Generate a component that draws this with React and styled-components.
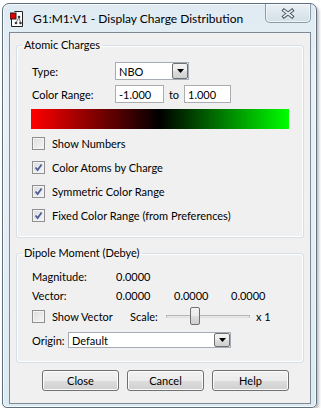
import React from "react";
import styled, { createGlobalStyle } from "styled-components";

const GlobalStyle = createGlobalStyle`
  html, body {
    margin: 0;
    padding: 0;
    background: #ffffff;
  }
  body {
    font-family: Lato, "Liberation Sans", Arial, sans-serif;
    font-size: 11px;
    color: #000;
  }
`;

const AppIcon = () => (
  <svg width="13" height="16" viewBox="0 0 13 16">
    <path d="M4.5 0.5 H12.5 V15.5 H1.5 V7" fill="#fff" stroke="#222" />
    <rect x="0" y="2" width="6" height="6" fill="#e00000" stroke="#222" strokeWidth="1" />
    <circle cx="9" cy="6" r="1.3" fill="#333" />
    <circle cx="6" cy="12" r="1.3" fill="#333" />
    <circle cx="10.5" cy="12" r="1.3" fill="#333" />
    <path d="M9 6 L6 12 M9 6 L10.5 12" stroke="#555" strokeWidth="0.8" />
  </svg>
);

const CloseGlyph = () => (
  <svg width="14" height="11" viewBox="0 0 14 11">
    <path d="M3 2.5 L11 8.5 M11 2.5 L3 8.5" stroke="#4e5866" strokeWidth="3.6" strokeLinecap="square" />
    <path d="M3 2.5 L11 8.5 M11 2.5 L3 8.5" stroke="#eef2f5" strokeWidth="1.6" strokeLinecap="square" />
  </svg>
);

const CheckGlyph = () => (
  <svg width="9" height="9" viewBox="0 0 9 9">
    <path d="M1.5 4.5 L3.6 7 L7.6 1.5" fill="none" stroke="#4a5d97" strokeWidth="1.8" />
  </svg>
);

const Arrow = () => (
  <svg width="7" height="4" viewBox="0 0 7 4">
    <path d="M0 0 H7 L3.5 4 Z" fill="#000" />
  </svg>
);

const ComboBox = ({ value, width, height }) => (
  <Combo $width={width} $height={height}>
    <ComboText>{value}</ComboText>
    <DropButton>
      <Arrow />
    </DropButton>
  </Combo>
);

const CheckBox = ({ checked }) => (
  <Box>{checked && <CheckGlyph />}</Box>
);

const App = () => {
  return (
    <>
      <GlobalStyle />
      <Window>
        <TitleBar>
          <AppIcon />
          <Title>G1:M1:V1 - Display Charge Distribution</Title>
          <CloseButton>
            <CloseGlyph />
          </CloseButton>
        </TitleBar>
        <Client>
          <Group>
            <Legend>Atomic Charges</Legend>
            <FieldRow $top={10}>
              <Label $w={83}>Type:</Label>
              <ComboBox value="NBO" width={74} height={18} />
            </FieldRow>
            <FieldRow $top={5}>
              <Label $w={83}>Color Range:</Label>
              <TextBox $w={49}>-1.000</TextBox>
              <To>to</To>
              <TextBox $w={47}>1.000</TextBox>
            </FieldRow>
            <Gradient />
            <CheckList>
              <CheckRow>
                <CheckBox />
                <CheckLabel>Show Numbers</CheckLabel>
              </CheckRow>
              <CheckRow>
                <CheckBox checked />
                <CheckLabel>Color Atoms by Charge</CheckLabel>
              </CheckRow>
              <CheckRow>
                <CheckBox checked />
                <CheckLabel>Symmetric Color Range</CheckLabel>
              </CheckRow>
              <CheckRow>
                <CheckBox checked />
                <CheckLabel>Fixed Color Range (from Preferences)</CheckLabel>
              </CheckRow>
            </CheckList>
          </Group>

          <Group $gap={8} $bottom={14}>
            <Legend>Dipole Moment (Debye)</Legend>
            <ValueRow $top={7}>
              <Label $w={84}>Magnitude:</Label>
              <Value $w={58}>0.0000</Value>
            </ValueRow>
            <ValueRow>
              <Label $w={84}>Vector:</Label>
              <Value $w={58}>0.0000</Value>
              <Value $w={57}>0.0000</Value>
              <Value $w={57}>0.0000</Value>
            </ValueRow>
            <VectorRow>
              <CheckBox />
              <CheckLabel $w={78}>Show Vector</CheckLabel>
              <Label $w={36}>Scale:</Label>
              <Slider>
                <Track />
                <Thumb $left={24} />
              </Slider>
              <Label>x 1</Label>
            </VectorRow>
            <FieldRow $top={5}>
              <Label $w={36}>Origin:</Label>
              <ComboBox value="Default" width={163} height={16} />
            </FieldRow>
          </Group>

          <Buttons>
            <Button>Close</Button>
            <Button>Cancel</Button>
            <Button>Help</Button>
          </Buttons>
        </Client>
      </Window>
    </>
  );
};

export default App;

const Window = styled.div`
  box-sizing: border-box;
  margin: 3px 0 0 2px;
  width: 315px;
  height: 405px;
  padding: 0 5px 3px 6px;
  display: flex;
  flex-direction: column;
  border: 1px solid #5f6f7e;
  border-radius: 7px 7px 5px 5px;
  background: linear-gradient(180deg, #dfeaf2 0%, #e9f1f6 20%, #e4eef4 60%, #dceaf1 100%);
  box-shadow: inset 0 0 0 1px rgba(255, 255, 255, 0.75), 2px 2px 3px rgba(0, 0, 0, 0.25);
`;

const TitleBar = styled.div`
  height: 28px;
  display: flex;
  align-items: center;
  flex-shrink: 0;
  svg {
    flex-shrink: 0;
  }
  > svg:first-child {
    margin-left: 1px;
    margin-top: 1px;
  }
`;

const Title = styled.div`
  margin-left: 10px;
  font-size: 12px;
  color: #000;
  white-space: nowrap;
  margin-top: 1px;
`;

const CloseButton = styled.div`
  margin-left: auto;
  align-self: flex-start;
  width: 46px;
  height: 19px;
  box-sizing: border-box;
  border: 1px solid #8d9aa5;
  border-top: none;
  border-radius: 0 0 5px 5px;
  background: linear-gradient(180deg, #eaf1f6 0%, #dde7ee 50%, #d3e0e8 100%);
  box-shadow: inset 0 0 0 1px rgba(255, 255, 255, 0.6);
  display: flex;
  align-items: center;
  justify-content: center;
`;

const Client = styled.div`
  flex: 1;
  box-sizing: border-box;
  border: 1px solid #7d8a96;
  background: #f0f0f0;
  padding: 5px 6px 10px 6px;
  display: flex;
  flex-direction: column;
`;

const Group = styled.fieldset`
  margin: ${({ $gap }) => ($gap ? `${$gap}px` : "0")} 0 0 0;
  padding: 0 15px ${({ $bottom }) => ($bottom ? $bottom : 10)}px 15px;
  border: 1px solid #d5dfe5;
  border-radius: 3px;
  min-width: 0;
  box-shadow: inset 0 0 0 1px #ffffff;
`;

const Legend = styled.legend`
  margin-left: -10px;
  padding: 0 2px;
  line-height: 14px;
  color: #000;
`;

const FieldRow = styled.div`
  display: flex;
  align-items: center;
  margin-top: ${({ $top }) => $top || 0}px;
`;

const Label = styled.div`
  flex-shrink: 0;
  width: ${({ $w }) => ($w ? `${$w}px` : "auto")};
  white-space: nowrap;
`;

const Combo = styled.div`
  box-sizing: border-box;
  width: ${({ $width }) => $width}px;
  height: ${({ $height }) => $height}px;
  border: 1px solid #a5acb5;
  background: #fff;
  display: flex;
  align-items: stretch;
`;

const ComboText = styled.div`
  flex: 1;
  padding-left: 3px;
  display: flex;
  align-items: center;
`;

const DropButton = styled.div`
  width: 16px;
  box-sizing: border-box;
  border: 1px solid #707070;
  border-radius: 2px;
  background: linear-gradient(180deg, #f2f2f2 0%, #ebebeb 50%, #dddddd 51%, #cfcfcf 100%);
  display: flex;
  align-items: center;
  justify-content: center;
`;

const TextBox = styled.div`
  box-sizing: border-box;
  width: ${({ $w }) => $w}px;
  height: 18px;
  border: 1px solid #abadb3;
  background: #fff;
  padding-left: 3px;
  display: flex;
  align-items: center;
`;

const To = styled.div`
  width: 20px;
  text-align: center;
`;

const Gradient = styled.div`
  margin: 6px 0 0 -1px;
  width: 258px;
  height: 20px;
  background: linear-gradient(90deg, #ff0000 0%, #000000 50%, #00ff00 100%);
`;

const CheckList = styled.div`
  margin-top: 2px;
  display: flex;
  flex-direction: column;
`;

const CheckRow = styled.div`
  height: 24px;
  display: flex;
  align-items: center;
`;

const Box = styled.div`
  box-sizing: border-box;
  width: 13px;
  height: 13px;
  flex-shrink: 0;
  border: 1px solid #8e8f8f;
  background: linear-gradient(135deg, #dcdcdc 0%, #f6f6f6 100%);
  box-shadow: inset 0 0 0 1px #f4f4f4;
  display: flex;
  align-items: center;
  justify-content: center;
`;

const CheckLabel = styled.div`
  margin-left: 7px;
  white-space: nowrap;
  width: ${({ $w }) => ($w ? `${$w}px` : "auto")};
  flex-shrink: 0;
`;

const ValueRow = styled.div`
  height: 19px;
  display: flex;
  align-items: center;
  margin-top: ${({ $top }) => $top || 0}px;
`;

const Value = styled.div`
  width: ${({ $w }) => $w}px;
  flex-shrink: 0;
`;

const VectorRow = styled.div`
  height: 22px;
  display: flex;
  align-items: center;
`;

const Slider = styled.div`
  position: relative;
  width: 84px;
  height: 18px;
  margin-right: 6px;
  flex-shrink: 0;
  display: flex;
  align-items: center;
`;

const Track = styled.div`
  width: 100%;
  height: 3px;
  box-sizing: border-box;
  border: 1px solid #b5b5b5;
  border-bottom-color: #e0e0e0;
  background: #e7eaea;
`;

const Thumb = styled.div`
  position: absolute;
  top: 0;
  left: ${({ $left }) => $left}px;
  width: 10px;
  height: 18px;
  box-sizing: border-box;
  border: 1px solid #707070;
  border-radius: 2px;
  background: linear-gradient(180deg, #f2f2f2 0%, #ebebeb 50%, #dddddd 51%, #cfcfcf 100%);
`;

const Buttons = styled.div`
  margin-top: 7px;
  padding-left: 26px;
  display: flex;
  gap: 8px;
`;

const Button = styled.div`
  box-sizing: border-box;
  width: 77px;
  height: 21px;
  border: 1px solid #707070;
  border-radius: 3px;
  background: linear-gradient(180deg, #f2f2f2 0%, #ebebeb 50%, #dddddd 51%, #cfcfcf 100%);
  box-shadow: inset 0 0 0 1px #fcfcfc;
  display: flex;
  align-items: center;
  justify-content: center;
`;
